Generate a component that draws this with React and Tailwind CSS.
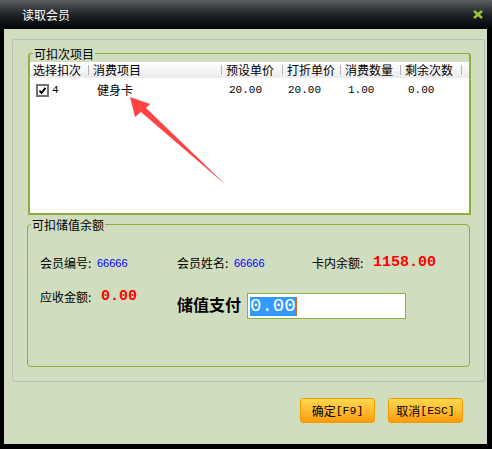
const cjk = "font-['Noto_Sans_CJK_SC',sans-serif]"
const mono = "font-['Liberation_Mono',monospace]"

const columns = [
  { title: '选择扣次', width: 'w-[59px]' },
  { title: '消费项目', width: 'w-[133px]' },
  { title: '预设单价', width: 'w-[61px]' },
  { title: '打折单价', width: 'w-[58px]' },
  { title: '消费数量', width: 'w-[60px]' },
  { title: '剩余次数', width: 'w-[61px]' },
]

const CheckBox = () => (
  <svg width="13" height="13" viewBox="0 0 13 13">
    <rect x="1" y="1" width="11" height="11" fill="#fff" stroke="#707070" strokeWidth="2" />
    <path d="M3.5 6.5 L5.5 9 L9.5 3.8" fill="none" stroke="#000" strokeWidth="2" />
  </svg>
)

const Arrow = () => (
  <svg
    className="pointer-events-none absolute left-[98px] top-[33px]"
    width="104"
    height="95"
    viewBox="128 95 104 95"
  >
    <polygon
      points="130,97 150,104 146,108 227,186 141,112 135,117"
      fill="#ff4242"
    />
  </svg>
)

const GroupTitle = ({ children }) => (
  <span className="absolute left-[3px] top-[-8px] bg-[#d0ddbf] px-[1px] text-[12px] leading-[16px] text-black">
    {children}
  </span>
)

const App = () => {
  return (
    <div className={`flex h-[449px] w-[492px] flex-col bg-black ${cjk}`}>
      <header className="flex h-[29px] items-center justify-between bg-linear-to-b from-[#5b6065] via-[#202429] to-[#030507] pl-[22px] pr-[9px]">
        <span className="text-[12px] leading-none text-white">读取会员</span>
        <svg width="10" height="9" viewBox="0 0 10 9" className="mt-[-1px]">
          <path d="M1 1 L9 8 M9 1 L1 8" stroke="#9acd32" strokeWidth="2.4" />
        </svg>
      </header>

      <main className="ml-[4px] h-[415px] w-[483px] bg-[#d0ddbf] pl-[8px] pt-[10px]">
        <div className="h-[343px] w-[473px] rounded-[3px] border border-[#b8bcb4] pl-[15px] pt-[13px]">
          <section className="relative flex h-[162px] w-[443px] flex-col rounded-t-[3px] border-x-2 border-b-2 border-t border-[#8ab03e] pt-[8px]">
            <GroupTitle>可扣次项目</GroupTitle>
            <div className="relative flex-1 bg-white">
              <div className="flex h-[16px] bg-linear-to-b from-white to-[#ebebeb] text-[12px] leading-[16px] text-black">
                {columns.map((column, index) => (
                  <div
                    className={`flex shrink-0 items-center justify-between ${column.width} ${index === 0 ? 'pl-[3px]' : 'pl-[4px]'}`}
                    key={column.title}
                  >
                    <span>{column.title}</span>
                    <span className="h-[10px] w-px bg-[#b4b4b4]" />
                  </div>
                ))}
              </div>
              <div className="flex h-[24px] items-center text-[12px] text-black">
                <div className="flex w-[59px] shrink-0 items-center pl-[6px]">
                  <CheckBox />
                  <span className={`ml-[3px] text-[11px] ${mono}`}>4</span>
                </div>
                <div className="w-[133px] shrink-0 pl-[8px]">健身卡</div>
                <div className={`w-[61px] shrink-0 pl-[7px] text-[11px] ${mono}`}>20.00</div>
                <div className={`w-[58px] shrink-0 pl-[5px] text-[11px] ${mono}`}>20.00</div>
                <div className={`w-[60px] shrink-0 pl-[7px] text-[11px] ${mono}`}>1.00</div>
                <div className={`w-[61px] shrink-0 pl-[7px] text-[11px] ${mono}`}>0.00</div>
              </div>
              <Arrow />
            </div>
          </section>

          <section className="relative ml-[-1px] mt-[9px] h-[143px] w-[443px] rounded-[4px] border border-[#8ab03e] pl-[12px] pt-[28px] text-[12px] text-black">
            <GroupTitle>可扣储值余额</GroupTitle>
            <div className="flex h-[20px] items-center">
              <div className="flex w-[137px] items-center">
                <span className="w-[57px]">会员编号:</span>
                <span className="font-['Liberation_Sans',sans-serif] text-[11px] text-[#0000ff]">66666</span>
              </div>
              <div className="flex w-[135px] items-center">
                <span className="w-[57px]">会员姓名:</span>
                <span className="font-['Liberation_Sans',sans-serif] text-[11px] text-[#0000ff]">66666</span>
              </div>
              <div className="flex items-center">
                <span className="w-[61px]">卡内余额:</span>
                <span className={`text-[15px] font-bold text-[#ff0000] ${mono}`}>1158.00</span>
              </div>
            </div>
            <div className="mt-[16px] flex items-start">
              <div className="flex h-[16px] w-[137px] items-center">
                <span className="w-[61px]">应收金额:</span>
                <span className={`text-[15px] font-bold text-[#ff0000] ${mono}`}>0.00</span>
              </div>
              <div className="mt-[4px] flex items-start">
                <span className="mt-[1px] text-[16px] font-bold leading-[20px]">储值支付</span>
                <div className="ml-[6px] flex h-[26px] w-[159px] items-center border border-[#8ab03e] bg-white pl-[2px]">
                  <span className={`h-[19px] border-r border-[#c8702a] bg-[#3399ff] text-[19px] leading-[19px] text-white ${mono}`}>
                    0.00
                  </span>
                </div>
              </div>
            </div>
          </section>
        </div>

        <div className="mt-[16px] flex justify-end gap-[13px] pr-[24px]">
          {[
            ['确定', '[F9]'],
            ['取消', '[ESC]'],
          ].map(([label, key]) => (
            <button
              className="flex h-[25px] w-[75px] items-center justify-center rounded-[3px] border border-[#f29a00] bg-linear-to-b from-[#ffd84d] to-[#ff9c00] text-[12px] text-black"
              key={label}
              type="button"
            >
              <span>{label}</span>
              <span className={`text-[11.5px] ${mono}`}>{key}</span>
            </button>
          ))}
        </div>
      </main>
    </div>
  )
}

export default App
